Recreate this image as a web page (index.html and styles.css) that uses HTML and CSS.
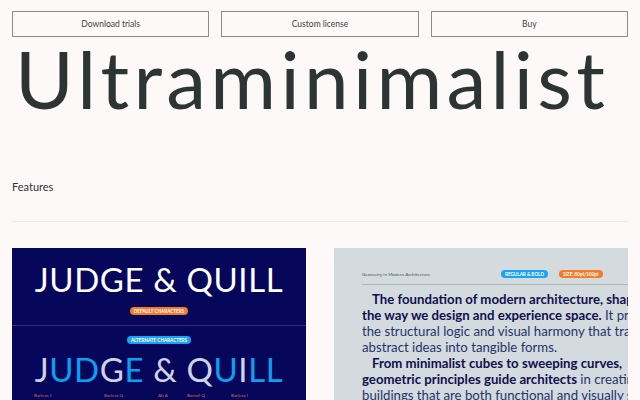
FILE: index.html
```html
<!DOCTYPE html>
<html>
<head>
<meta charset="utf-8">
<link rel="stylesheet" href="styles.css">
</head>
<body>
<div class="page">
  <nav class="actions">
    <a class="btn">Download trials</a>
    <a class="btn">Custom license</a>
    <a class="btn">Buy</a>
  </nav>
  <h1 class="title">Ultraminimalist</h1>
  <h2 class="section">Features</h2>
  <hr class="rule">
  <div class="cards">
    <div class="card card-dark">
      <div class="jq">JUDGE &amp; QUILL</div>
      <div class="pill-row row-default"><span class="pill pill-orange">DEFAULT CHARACTERS</span></div>
      <div class="divider"></div>
      <div class="pill-row row-alt"><span class="pill pill-blue">ALTERNATE CHARACTERS</span></div>
      <div class="jq jq-alt"><span class="g">J</span><span class="b">UD</span><span class="g">G</span><span class="b">E</span> <span class="g">&amp;</span> <span class="g">Q</span><span class="b">U</span><span class="g">I</span><span class="b">LL</span></div>
      <div class="labels">
        <span class="lab l1">Barless J</span>
        <span class="lab l2">Barless G</span>
        <span class="lab l3">Alt A</span>
        <span class="lab l4">Bartail Q</span>
        <span class="lab l5">Barless I</span>
      </div>
    </div>
    <div class="card card-light">
      <div class="inner">
        <div class="head">
          <span class="head-title">Geometry in Modern Architecture</span>
          <span class="pill pill-blue sm">REGULAR &amp; BOLD</span>
          <span class="pill pill-orange sm">SIZE: 80pt/100pt</span>
        </div>
        <p class="para first"><b>The foundation of modern architecture, shapes<br>the way we design and experience space.</b> It provides<br>the structural logic and visual harmony that transforms<br>abstract ideas into tangible forms.</p>
        <p class="para"><b>From minimalist cubes to sweeping curves,<br>geometric principles guide architects</b> in creating<br>buildings that are both functional and visually striking.</p>
      </div>
    </div>
  </div>
</div>
</body>
</html>
```
FILE: styles.css
```css
html, body {
  margin: 0;
  padding: 0;
  background: #fdf9f8;
  overflow: hidden;
}
.page {
  padding: 11px 12px 0;
  font-family: "Lato", "Open Sans", sans-serif;
  color: #2c3533;
}
.actions {
  display: grid;
  grid-template-columns: 1fr 1fr 1fr;
  gap: 12px;
}
.btn {
  display: flex;
  align-items: center;
  justify-content: center;
  height: 24px;
  border: 1px solid #8d8d8b;
  font-size: 8.5px;
  color: #3a3f3e;
}
.title {
  margin: 0;
  font-size: 80px;
  font-weight: 400;
  line-height: 80px;
  margin-top: 1px;
  padding-left: 3px;
  color: #2c3533;
  letter-spacing: 4.3px;
  white-space: nowrap;
}
.section {
  margin: 62px 0 0;
  font-size: 11px;
  font-weight: 400;
  line-height: 14px;
  color: #333;
}
.rule {
  margin: 27px 0 0;
  border: 0;
  height: 1px;
  background: #efeae9;
}
.cards {
  margin-top: 26px;
  display: grid;
  grid-template-columns: 294px 294px;
  gap: 28px;
}
.card {
  height: 170px;
  overflow: hidden;
}
.card-dark {
  background: #06065a;
  text-align: center;
}
.jq {
  font-family: "Lato", sans-serif;
  font-size: 33px;
  line-height: 36px;
  color: #fff;
  letter-spacing: 0.6px;
  margin-top: 13px;
  white-space: nowrap;
}
.pill-row {
  display: flex;
  justify-content: center;
}
.pill {
  display: inline-block;
  font-size: 4.6px;
  font-weight: 700;
  line-height: 8px;
  height: 8px;
  padding: 0 4px;
  border-radius: 5px;
  color: #fff;
  white-space: nowrap;
}
.pill-orange { background: #f47a2a; }
.pill-blue { background: #1ca3f0; }
.row-default { margin-top: 10px; }
.divider {
  height: 1px;
  background: #3b2a78;
  margin-top: 10px;
}
.row-alt { margin-top: 10px; }
.jq-alt { margin-top: 7px; }
.jq-alt .g { color: #cdd3e3; }
.jq-alt .b { color: #0aa0f0; }
.labels {
  position: relative;
  height: 10px;
  margin-top: 5px;
}
.lab {
  position: absolute;
  top: 0;
  font-size: 4.6px;
  line-height: 6px;
  color: #d0704a;
  white-space: nowrap;
}
.l1 { left: 22px; }
.l2 { left: 92px; }
.l3 { left: 146px; }
.l4 { left: 175px; }
.l5 { left: 219px; }
.card-light {
  background: #d3dbdf;
}
.inner {
  width: 330px;
  padding-left: 28px;
}
.head {
  display: flex;
  align-items: center;
  height: 8px;
  margin-top: 22px;
  padding-bottom: 6px;
  border-bottom: 1px solid #aeb6ba;
}
.head-title {
  font-size: 4.6px;
  color: #45525a;
  width: 139px;
  white-space: nowrap;
}
.sm { margin-right: 11px; }
.para {
  margin: 0;
  font-size: 13.2px;
  line-height: 16px;
  color: #26336a;
  text-indent: 10px;
  white-space: nowrap;
}
.para.first { margin-top: 6px; }
.para b { color: #10104e; font-weight: 700; }
```
